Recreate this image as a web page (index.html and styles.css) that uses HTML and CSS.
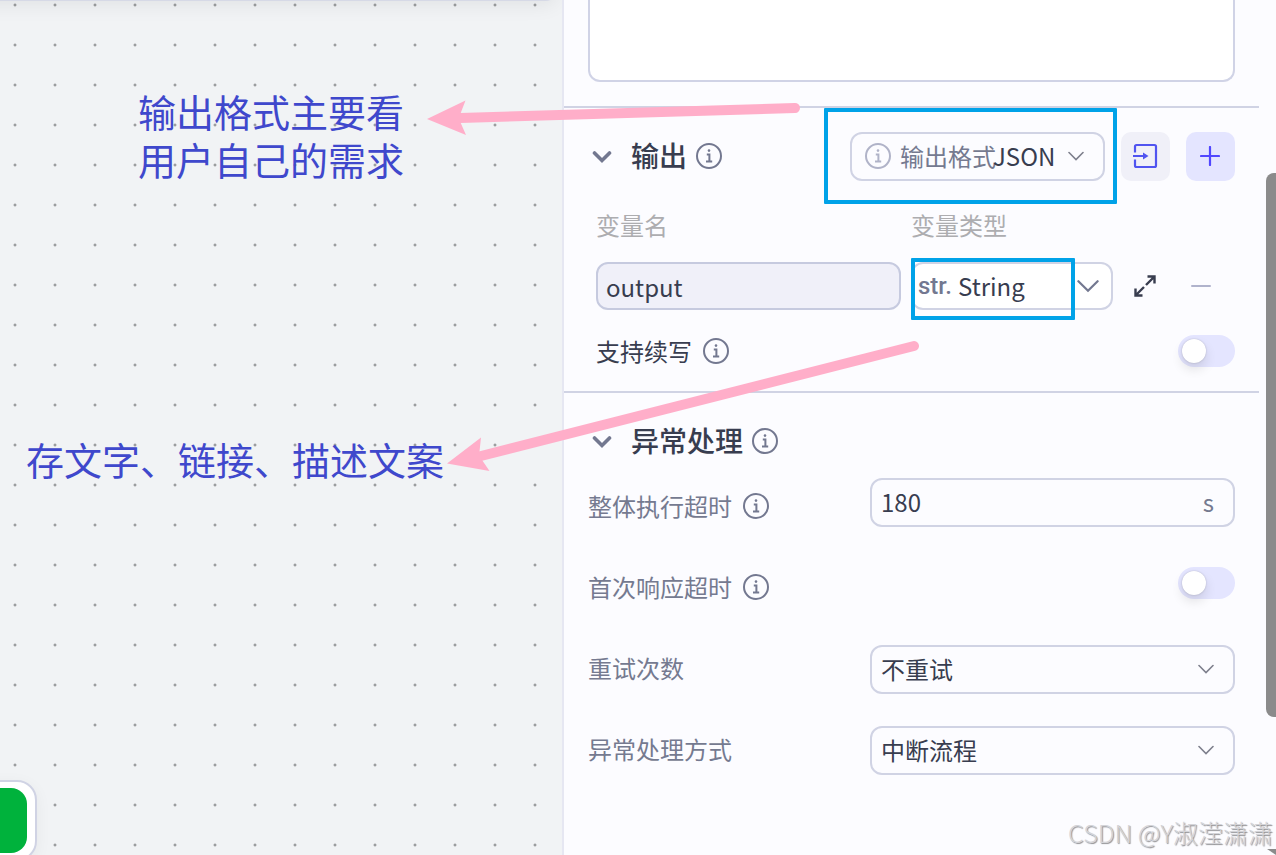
FILE: index.html
```
<!DOCTYPE html>
<html lang="zh-CN">
<head>
  <meta charset="UTF-8">
  <meta name="viewport" content="width=device-width, initial-scale=1.0">
  <title>输出</title>
  <link rel="stylesheet" href="styles.css">
</head>
<body>
  <!-- Shared icons -->
  <svg class="sprite" width="0" height="0" aria-hidden="true">
    <symbol id="icon-info" viewBox="0 0 26 26">
      <circle cx="13" cy="13" r="12" fill="none" stroke="currentColor" stroke-width="2"/>
      <circle cx="13" cy="7.6" r="1.3" fill="currentColor"/>
      <path d="M10.8 11.4h2.6v7M10 18.6h6.2" fill="none" stroke="currentColor" stroke-width="2"/>
    </symbol>
    <symbol id="icon-fold" viewBox="0 0 20 20">
      <path d="M2.5 6l7.500 7.500 7.500-7.500" fill="none" stroke="currentColor" stroke-width="3.600" stroke-linecap="round"/>
    </symbol>
    <symbol id="icon-down" viewBox="0 0 16 16">
      <path d="M1 4.500l7 7 7-7" fill="none" stroke="currentColor" stroke-width="1.6" stroke-linecap="round"/>
    </symbol>
  </svg>

  <div class="layout">
    <main class="canvas">
      <div class="node-edge"></div>
      <div class="node-card"><div class="node-icon"></div></div>
      <p class="note note-format">输出格式主要看<br>用户自己的需求</p>
      <p class="note note-string">存文字、链接、描述文案</p>
    </main>

    <aside class="panel">
      <div class="panel-body">
        <section class="section section-prompt">
          <textarea class="prompt" aria-label="提示词"></textarea>
        </section>

        <!-- Output -->
        <section class="section">
          <div class="section-header">
            <svg class="fold"><use href="#icon-fold"/></svg>
            <h2>输出</h2>
            <svg class="info"><use href="#icon-info"/></svg>
            <div class="header-actions">
              <div class="format-box">
                <svg class="info"><use href="#icon-info"/></svg>
                <label for="format">输出格式</label>
                <select id="format"><option>JSON</option></select>
                <svg class="down"><use href="#icon-down"/></svg>
                <span class="frame frame-format"></span>
              </div>
              <button type="button" class="icon-button" aria-label="导入">
                <svg width="26" height="26" viewBox="0 0 26 26" fill="none" stroke="currentColor" stroke-width="2.2">
                  <path d="M3 9.500V3.500a1.500 1.500 0 0 1 1.500-1.500h18a1.500 1.500 0 0 1 1.500 1.500v19a1.500 1.500 0 0 1-1.500 1.500h-18a1.500 1.500 0 0 1-1.500-1.500V16.500M1 13h12"/>
                  <path d="M11 9.500l5.500 3.500-5.500 3.500z" fill="currentColor" stroke="none"/>
                </svg>
              </button>
              <button type="button" class="icon-button add" aria-label="新增">
                <svg width="20" height="20" viewBox="0 0 20 20" stroke="currentColor" stroke-width="2.2" stroke-linecap="round">
                  <path d="M10 1v18M1 10h18"/>
                </svg>
              </button>
            </div>
          </div>

          <div class="variables">
            <label class="column-name" for="var-name">变量名</label>
            <label class="column-name" for="var-type">变量类型</label>
            <span></span>
            <input type="text" class="var-name" id="var-name" value="output">
            <div class="var-type">
              <span class="type-mark">str.</span>
              <select id="var-type"><option>String</option></select>
              <svg class="down"><use href="#icon-down"/></svg>
              <span class="frame frame-type"></span>
            </div>
            <div class="row-actions">
              <button type="button" class="plain-button" aria-label="展开">
                <svg width="22" height="22" viewBox="0 0 22 22" fill="none" stroke="currentColor" stroke-width="2.4">
                  <path d="M13.5 1.5h7v7M20 2l-8 8M8.500 20.500h-7v-7M2 20l8-8"/>
                </svg>
              </button>
              <button type="button" class="plain-button remove" aria-label="删除">
                <svg width="20" height="20" viewBox="0 0 20 20" stroke="currentColor" stroke-width="2" stroke-linecap="round">
                  <path d="M1 10h18"/>
                </svg>
              </button>
            </div>
          </div>

          <div class="continue-row">
            <label for="continue">支持续写</label>
            <svg class="info"><use href="#icon-info"/></svg>
            <input type="checkbox" class="switch" id="continue">
          </div>
        </section>

        <!-- Exception handling -->
        <section class="section">
          <div class="section-header">
            <svg class="fold"><use href="#icon-fold"/></svg>
            <h2>异常处理</h2>
            <svg class="info"><use href="#icon-info"/></svg>
          </div>
          <div class="settings">
            <div class="setting setting-timeout">
              <label for="timeout">整体执行超时 <svg class="info"><use href="#icon-info"/></svg></label>
              <div class="field">
                <input type="text" id="timeout" value="180">
                <span class="unit">s</span>
              </div>
            </div>
            <div class="setting">
              <label for="first-timeout">首次响应超时 <svg class="info"><use href="#icon-info"/></svg></label>
              <input type="checkbox" class="switch" id="first-timeout">
            </div>
            <div class="setting">
              <label for="retry">重试次数</label>
              <div class="field">
                <select id="retry"><option>不重试</option></select>
                <svg class="down"><use href="#icon-down"/></svg>
              </div>
            </div>
            <div class="setting">
              <label for="on-error">异常处理方式</label>
              <div class="field">
                <select id="on-error"><option>中断流程</option></select>
                <svg class="down"><use href="#icon-down"/></svg>
              </div>
            </div>
          </div>
        </section>
      </div>
      <div class="scroll-thumb"></div>
      <div class="corner"></div>
      <div class="watermark">CSDN @Y淑滢潇潇</div>
    </aside>

    <!-- Arrows from the controls to the notes -->
    <svg class="arrows" width="930" height="490" viewBox="0 0 930 490">
      <path class="shaft" d="M795 108L460 118M914 346L481 456"/>
      <path class="head" d="M427 119l38.500-18.500-5 13v9l5.500 12.500zM447 463.500l34-26-1.500 14 2.500 8.500 7.500 11z"/>
    </svg>
  </div>
</body>
</html>
```

FILE: styles.css
```
* {
    box-sizing: border-box;
}

body {
    margin: 0;
    font-family: 'Noto Sans CJK SC', sans-serif;
    font-size: 24px;
    line-height: 36px;
    color: #383d4f;
}

h2,
p {
    margin: 0;
}

input,
select,
textarea,
button {
    font: inherit;
    color: inherit;
    margin: 0;
    padding: 0;
    border: none;
    outline: none;
    background: none;
}

select {
    appearance: none;
}

.sprite {
    position: absolute;
}

.layout {
    position: relative;
    display: flex;
    height: 100vh;
    overflow: hidden;
}

/* Canvas */
.canvas {
    position: relative;
    flex: 0 0 562px;
    overflow: hidden;
    background-color: #f1f3f5;
    background-image: radial-gradient(circle, #6c6e70 0, transparent 2px);
    background-size: 40px 40px;
    background-position: -5px -15px;
}

.node-edge {
    position: absolute;
    top: -39px;
    left: -40px;
    right: 4px;
    height: 40px;
    border: 2px solid #d6d9e6;
    border-radius: 12px;
    box-shadow: 0 4px 20px rgba(0, 0, 0, 0.07);
}

.node-card {
    position: absolute;
    top: 780px;
    left: -44px;
    width: 81px;
    height: 81px;
    padding: 6px 8px 6px 6px;
    border: 2px solid #d0d3e4;
    border-radius: 20px;
    background: #fff;
    box-shadow: 0 4px 16px rgba(0, 0, 0, 0.05);
}

.node-icon {
    height: 65px;
    border-radius: 16px;
    background: #00b23c;
}

.note {
    position: absolute;
    font-size: 38px;
    line-height: 48px;
    color: #3f48cc;
    white-space: nowrap;
}

.note-format {
    top: 87px;
    left: 138px;
}

.note-string {
    top: 435px;
    left: 26px;
}

.arrows {
    position: absolute;
    top: 0;
    left: 0;
    pointer-events: none;
}

.shaft {
    fill: none;
    stroke: #ffaec9;
    stroke-width: 10;
    stroke-linecap: round;
}

.head {
    fill: #ffaec9;
}

/* Panel */
.panel {
    position: relative;
    flex: 1;
    min-width: 0;
    padding-right: 17px;
    border-left: 2px solid #e6e7f2;
    background: #fcfcff;
}

.section {
    padding: 24px;
    border-bottom: 2px solid #d0d3e4;
}

.section-prompt {
    padding-top: 0;
}

.section:last-child {
    border-bottom: none;
}

.prompt {
    display: block;
    width: 100%;
    height: 82px;
    border: 2px solid #d0d3e6;
    border-top: none;
    border-radius: 0 0 12px 12px;
    background: #fff;
    resize: none;
}

.section-header {
    display: flex;
    align-items: center;
    height: 49px;
}

.section-header h2 {
    margin: 0 9px 0 19px;
    padding-bottom: 3px;
    font-size: 28px;
    font-weight: 500;
}

.fold {
    width: 20px;
    height: 20px;
    margin-left: 4px;
    color: #737890;
}

.info {
    flex: none;
    width: 26px;
    height: 26px;
    color: #737890;
}

.section-header > .info {
    margin-bottom: 2px;
}

.down {
    width: 16px;
    height: 16px;
    color: #7d7f8c;
    pointer-events: none;
}

.header-actions {
    display: flex;
    gap: 16px;
    margin-left: auto;
}

.format-box {
    position: relative;
    display: flex;
    align-items: center;
    width: 255px;
    height: 49px;
    padding: 0 19px 2px 13px;
    border: 2px solid #d0d3e4;
    border-radius: 12px;
    color: #383d4f;
}

.format-box .info {
    margin-right: 9px;
    color: #b0b3c8;
}

.format-box label {
    margin-right: -3px;
    color: #757a90;
}

.format-box select {
    flex: 1;
}

.frame {
    position: absolute;
    border: 4px solid #00a2e8;
    border-radius: 1px;
    pointer-events: none;
}

.frame-format {
    inset: -26px -14px -25px -28px;
}

.frame-type {
    inset: -6px 36px -12px -2px;
}

.icon-button {
    display: flex;
    align-items: center;
    justify-content: center;
    width: 49px;
    height: 49px;
    padding: 0 2px 2px 0;
    border-radius: 10px;
    background: #f0f0f8;
    color: #5054f0;
}

.icon-button.add {
    background: #e4e5ff;
    color: #5147ff;
}

.variables {
    display: grid;
    grid-template-columns: 1fr 202px 112px;
    column-gap: 10px;
    row-gap: 19px;
    margin: 26px 0 25px 8px;
}

.column-name {
    color: #adadb0;
}

.var-name {
    width: 100%;
    height: 48px;
    padding: 0 8px;
    border: 2px solid #c6cadf;
    border-radius: 12px;
    background: #f0f0f9;
}

.var-type {
    position: relative;
    display: flex;
    align-items: center;
    height: 48px;
    padding: 0 12px 0 5px;
    border: 2px solid #d0d3e4;
    border-radius: 12px;
    background: #fff;
}

.type-mark {
    width: 40px;
    font-family: Roboto, sans-serif;
    font-weight: 500;
    color: #737890;
}

.var-type select {
    flex: 1;
}

.var-type .down {
    width: 22px;
    height: 22px;
    color: #737890;
}

.row-actions {
    display: flex;
    align-items: center;
    gap: 12px;
}

.plain-button {
    display: flex;
    align-items: center;
    justify-content: center;
    width: 44px;
    height: 44px;
}

.plain-button.remove {
    color: #b0b3cc;
}

.continue-row {
    display: flex;
    align-items: center;
    gap: 11px;
    height: 32px;
    margin-left: 8px;
}

.switch {
    appearance: none;
    position: relative;
    width: 57px;
    height: 32px;
    margin-left: auto;
    border-radius: 16px;
    background: #e4e5ff;
}

.switch::before {
    content: '';
    position: absolute;
    top: 4px;
    left: 4px;
    width: 24px;
    height: 24px;
    border-radius: 50%;
    background: #fff;
    box-shadow: 0 0 2px rgba(0, 0, 0, 0.2), 0 6px 12px rgba(0, 0, 0, 0.12);
}

/* Settings */
.settings {
    display: flex;
    flex-direction: column;
    gap: 32px;
    margin-top: 12px;
}

.setting {
    display: flex;
    justify-content: space-between;
    height: 49px;
}

.setting-timeout {
    height: 54px;
}

.setting label {
    display: flex;
    align-items: center;
    align-self: flex-end;
    gap: 11px;
    height: 49px;
    padding-bottom: 3px;
    color: #757a90;
}

.setting .switch {
    margin-top: 3px;
}

.field {
    display: flex;
    align-items: center;
    width: 365px;
    height: 49px;
    padding: 0 19px 1px 9px;
    border: 2px solid #d0d3e4;
    border-radius: 12px;
}

.field input,
.field select {
    flex: 1;
    min-width: 0;
}

.unit {
    color: #757a90;
}

.scroll-thumb {
    position: absolute;
    top: 173px;
    right: 0;
    width: 10px;
    height: 544px;
    border-radius: 8px 0 0 8px;
    background: #8b8b8b;
}

.corner {
    position: absolute;
    right: 0;
    bottom: 0;
    border-top: 6px solid #8b8b8b;
    border-left: 9px solid transparent;
}

.watermark {
    position: absolute;
    right: 3px;
    bottom: 5px;
    font-size: 25px;
    font-weight: 300;
    color: #d4d4d8;
    text-shadow: 1px 1px 1px #8e8e92;
}
```
